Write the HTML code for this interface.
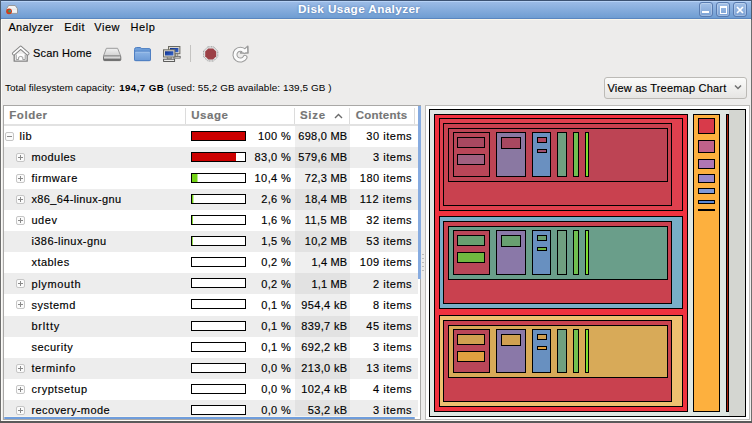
<!DOCTYPE html>
<html><head><meta charset="utf-8"><style>
*{margin:0;padding:0;box-sizing:content-box}
html,body{width:752px;height:423px;overflow:hidden;background:#edeceb;font-family:"Liberation Sans",sans-serif}
#win{position:absolute;left:0;top:0;width:752px;height:423px;overflow:hidden}
.f{position:absolute}
.b{position:absolute;border:1px solid #000}
.t{position:absolute;font-size:11.8px;line-height:22px;color:#000;-webkit-text-stroke:0.1px #000;white-space:nowrap;height:21px}
.r{text-align:right}
.exp{position:absolute;width:7px;height:7px;border:1px solid #c6c6c6;border-radius:2px;background:#fbfbfb}
.eh{position:absolute;left:1px;top:3px;width:5px;height:1px;background:#8a8a8a}
.ev{position:absolute;left:3px;top:1px;width:1px;height:5px;background:#8a8a8a}
.bar{position:absolute;width:53px;height:8px;border:1px solid #000;background:#fff}
.hd{position:absolute;font-size:12px;font-weight:bold;color:#747474;line-height:18px;top:106px;letter-spacing:0.3px}
.sep{position:absolute;top:108px;width:1px;height:16px;background:#dcdcdc}
.menu{position:absolute;top:19px;font-size:11.4px;line-height:17px;color:#000;-webkit-text-stroke:0.2px #000}
</style></head><body><div id="win">
<!-- title bar -->
<div class="f" style="left:0;top:0;width:752px;height:1px;background:#3c5272"></div>
<div class="f" style="left:0;top:1px;width:752px;height:1px;background:#b6d2f6"></div>
<div class="f" style="left:0;top:2px;width:752px;height:16px;background:linear-gradient(#9bbbe6,#6f9dd2)"></div>
<div class="f" style="left:0;top:18px;width:752px;height:1px;background:#5a86bf"></div>
<div class="f" style="left:0;top:19px;width:752px;height:1px;background:#fbf7ec"></div>
<div class="f" style="left:0;top:0;width:1px;height:423px;background:#4a5a70"></div>
<div class="f" style="left:751px;top:0;width:1px;height:423px;background:#4a5a70"></div>
<div class="f" style="left:0;top:20px;width:1px;height:403px;background:#6e6e6e"></div>
<div class="f" style="left:751px;top:20px;width:1px;height:403px;background:#6e6e6e"></div>
<div class="f" style="left:0;top:421px;width:752px;height:2px;background:#5a5a5a"></div><div class="f" style="left:1px;top:20px;width:1px;height:401px;background:#fcfbf7"></div><div class="f" style="left:1px;top:420px;width:750px;height:1px;background:#fcfbf7"></div>

<!-- title icon -->
<svg class="f" style="left:0;top:0" width="24" height="20" viewBox="0 0 24 20">
<path d="M8.6 5.5H15.2L17.5 8.8V13.4H6.6V8.8Z" fill="#f3f3f3" stroke="#8c8c8c" stroke-width="0.8" stroke-linejoin="round"/>
<path d="M7 9.2H17.1" stroke="#d8d8d8" stroke-width="0.6"/>
<circle cx="9.1" cy="11.3" r="2.9" fill="#d23c1c"/>
<circle cx="9.6" cy="11.2" r="1.4" fill="#3a9a58"/>
<circle cx="10.2" cy="11" r="0.7" fill="#4a78d0"/>
</svg>
<!-- window buttons -->
<div class="f" style="left:699px;top:2px;width:12px;height:13px;border:1px solid #587bb0;border-radius:3px;background:linear-gradient(#a3c1e8,#7ca2d4);box-shadow:inset 0 0 0 1px rgba(255,255,255,0.25)"></div>
<div class="f" style="left:702px;top:11px;width:7px;height:2px;background:#fff"></div>
<div class="f" style="left:716px;top:2px;width:12px;height:13px;border:1px solid #587bb0;border-radius:3px;background:linear-gradient(#a3c1e8,#7ca2d4);box-shadow:inset 0 0 0 1px rgba(255,255,255,0.25)"></div>
<div class="f" style="left:720px;top:6px;width:5px;height:5px;border:1px solid #fff;border-top-width:2px"></div>
<div class="f" style="left:733px;top:2px;width:12px;height:13px;border:1px solid #587bb0;border-radius:3px;background:linear-gradient(#a3c1e8,#7ca2d4);box-shadow:inset 0 0 0 1px rgba(255,255,255,0.25)"></div>
<svg class="f" style="left:735px;top:5px" width="10" height="10" viewBox="0 0 10 10"><path d="M2 2l6 6M8 2l-6 6" stroke="#fff" stroke-width="1.7"/></svg>
<!-- menu -->

<!-- toolbar -->
<svg class="f" style="left:8px;top:42px" width="24" height="24" viewBox="0 0 24 24">
<path d="M6.2 11.8V19.2H19.2V11.8" fill="#fdfdfd" stroke="#828282" stroke-width="1.3" stroke-linejoin="round"/>
<path d="M8.2 12.5V17.6H10.6V15.2Q12.7 13.6 14.8 15.2V17.6H17.2V12.5" fill="none" stroke="#9a9a9a" stroke-width="1"/>
<path d="M5.8 11.6L12.7 5.6 19.6 11.6" fill="none" stroke="#858585" stroke-width="3.8" stroke-linecap="round" stroke-linejoin="round"/>
<path d="M5.8 11.6L12.7 5.6 19.6 11.6" fill="none" stroke="#fdfdfd" stroke-width="1.9" stroke-linecap="round" stroke-linejoin="round"/>
</svg>

<svg class="f" style="left:100px;top:42px" width="24" height="24" viewBox="0 0 24 24">
<defs><linearGradient id="dg" x1="0" y1="0" x2="0" y2="1"><stop offset="0" stop-color="#f2f2f2"/><stop offset="1" stop-color="#cfcfcf"/></linearGradient>
<linearGradient id="db" x1="0" y1="0" x2="0" y2="1"><stop offset="0" stop-color="#fbfbfb"/><stop offset="0.45" stop-color="#c8c8c8"/><stop offset="1" stop-color="#2c2c2c"/></linearGradient></defs>
<path d="M6.4 6.3H17.6L20.8 14.2H3.4Z" fill="url(#dg)" stroke="#9c9c9c" stroke-width="1"/>
<rect x="3.5" y="14" width="17.3" height="4.6" rx="1" fill="url(#db)" stroke="#6c6c6c" stroke-width="0.9"/>
</svg>
<svg class="f" style="left:130px;top:42px" width="24" height="24" viewBox="0 0 24 24">
<defs><linearGradient id="fg" x1="0" y1="0" x2="0" y2="1"><stop offset="0" stop-color="#8db5e6"/><stop offset="1" stop-color="#6c9ad6"/></linearGradient></defs>
<path d="M4.5 7.5Q4.5 5.5 6.5 5.5H10.2L11.8 6.6H19.2Q20.5 6.6 20.5 8V17.6Q20.5 18.6 19.4 18.6H5.6Q4.5 18.6 4.5 17.5Z" fill="#6f9fda" stroke="#4f7fc2" stroke-width="1"/>
<path d="M4.5 9.2H20.5V17.4Q20.5 18.6 19.3 18.6H5.7Q4.5 18.6 4.5 17.4Z" fill="url(#fg)" stroke="#4f7fc2" stroke-width="1"/>
<path d="M5.5 10.2H19.5" stroke="#a8c8ee" stroke-width="0.8"/>
</svg>
<svg class="f" style="left:160px;top:42px" width="24" height="24" viewBox="0 0 24 24">
<defs><linearGradient id="sg" x1="0" y1="0" x2="1" y2="1"><stop offset="0" stop-color="#0d2f8a"/><stop offset="1" stop-color="#3a6ad0"/></linearGradient></defs>
<rect x="15.6" y="11.5" width="2.2" height="3" fill="#d0d0c8" stroke="#777" stroke-width="0.7"/>
<rect x="13.8" y="14.3" width="6.4" height="1.8" fill="#e8e8e4" stroke="#555" stroke-width="0.8"/>
<rect x="8.5" y="4.5" width="11.4" height="7.2" fill="#dcd8ce" stroke="#6c6c64" stroke-width="1"/>
<rect x="10" y="6" width="8.4" height="4.2" fill="url(#sg)"/>
<rect x="7.2" y="14.5" width="4" height="2.4" fill="#d4d4cc" stroke="#777" stroke-width="0.8"/>
<rect x="3.5" y="7.8" width="11.4" height="7.2" fill="#dcd8ce" stroke="#6c6c64" stroke-width="1"/>
<rect x="5" y="9.3" width="8.4" height="4.2" fill="url(#sg)"/>
<rect x="3.6" y="17.2" width="11" height="2.3" fill="#ececea" stroke="#4e4e4e" stroke-width="0.9"/>
</svg>
<div class="f" style="left:190px;top:45px;width:1px;height:17px;background:#c4c3c1"></div>
<svg class="f" style="left:198px;top:42px" width="24" height="24" viewBox="0 0 24 24">
<path d="M9.8 4.8H15.6L19.8 9V14.8L15.6 19H9.8L5.6 14.8V9Z" fill="#e2e4e4" stroke="#8e9090" stroke-width="0.9" stroke-dasharray="1 0.6"/>
<path d="M10.3 6.4H15.1L18.2 9.5V14.3L15.1 17.4H10.3L7.2 14.3V9.5Z" fill="#9c4046"/>
</svg>
<svg class="f" style="left:228px;top:42px" width="24" height="24" viewBox="0 0 24 24">
<path d="M16.4 9.1A5.4 5.4 0 1 0 17 15.4" fill="none" stroke="#9a9a9a" stroke-width="5" stroke-linecap="round"/>
<path d="M12.6 10.9L20 10.9 19.8 4.4Z" fill="#9a9a9a" stroke="#9a9a9a" stroke-width="1.6" stroke-linejoin="round"/>
<path d="M16.4 9.1A5.4 5.4 0 1 0 17 15.4" fill="none" stroke="#fbfbfb" stroke-width="3" stroke-linecap="round"/>
<path d="M13.6 10.2L19.2 10.2 19 5.6Z" fill="#fbfbfb"/>
</svg>
<!-- info line -->

<!-- combo -->
<div class="f" style="left:604px;top:77px;width:141px;height:20px;border:1px solid #bcbab6;border-radius:3px;background:linear-gradient(#fbfbfa,#e6e5e3)"></div>

<svg class="f" style="left:734px;top:84px" width="8" height="6" viewBox="0 0 8 6"><path d="M1 1.5L4 4.5 7 1.5" fill="none" stroke="#707070" stroke-width="1.5"/></svg>
<!-- tree -->
<div class="f" style="left:3px;top:105px;width:416px;height:313px;border:1px solid #a9a8a6;background:#fff"></div>
<div class="f" style="left:4px;top:124px;width:414px;height:2px;background:#e2e2e2"></div>

<div class="sep" style="left:185px"></div>

<div class="sep" style="left:294px"></div>

<svg class="f" style="left:334px;top:113px" width="9" height="6" viewBox="0 0 9 6"><path d="M1 5L4.5 1.5 8 5" fill="none" stroke="#6a6a6a" stroke-width="1.4"/></svg>
<div class="sep" style="left:349px"></div>

<div class="sep" style="left:414px"></div>
<div class="f" style="left:4px;top:126px;width:414px;height:21px;background:#ffffff"></div><div class="f" style="left:295px;top:126px;width:55px;height:21px;background:#efefef"></div><div class="exp" style="left:5px;top:132px"><div class="eh"></div></div><div class="bar" style="left:191px;top:131px"><div style="position:absolute;left:0;top:0;width:53px;height:8px;background:#cc0000"></div></div><div class="f" style="left:4px;top:147px;width:414px;height:21px;background:#ededed"></div><div class="f" style="left:295px;top:147px;width:55px;height:21px;background:#e2e2e2"></div><div class="exp" style="left:16px;top:153px"><div class="eh"></div><div class="ev"></div></div><div class="bar" style="left:191px;top:152px"><div style="position:absolute;left:0;top:0;width:44px;height:8px;background:#cc0000"></div></div><div class="f" style="left:4px;top:168px;width:414px;height:21px;background:#ffffff"></div><div class="f" style="left:295px;top:168px;width:55px;height:21px;background:#efefef"></div><div class="exp" style="left:16px;top:174px"><div class="eh"></div><div class="ev"></div></div><div class="bar" style="left:191px;top:173px"><div style="position:absolute;left:0;top:0;width:5px;height:8px;background:#73d216"></div><div style="position:absolute;left:5px;top:0;width:1px;height:8px;background:#73d216;opacity:0.49"></div></div><div class="f" style="left:4px;top:189px;width:414px;height:21px;background:#ededed"></div><div class="f" style="left:295px;top:189px;width:55px;height:21px;background:#e2e2e2"></div><div class="exp" style="left:16px;top:195px"><div class="eh"></div><div class="ev"></div></div><div class="bar" style="left:191px;top:194px"><div style="position:absolute;left:0;top:0;width:1px;height:8px;background:#73d216"></div><div style="position:absolute;left:1px;top:0;width:1px;height:8px;background:#73d216;opacity:0.40"></div></div><div class="f" style="left:4px;top:210px;width:414px;height:21px;background:#ffffff"></div><div class="f" style="left:295px;top:210px;width:55px;height:21px;background:#efefef"></div><div class="exp" style="left:16px;top:216px"><div class="eh"></div><div class="ev"></div></div><div class="bar" style="left:191px;top:215px"><div style="position:absolute;left:0px;top:0;width:1px;height:8px;background:#73d216;opacity:0.87"></div></div><div class="f" style="left:4px;top:231px;width:414px;height:21px;background:#ededed"></div><div class="f" style="left:295px;top:231px;width:55px;height:21px;background:#e2e2e2"></div><div class="bar" style="left:191px;top:236px"><div style="position:absolute;left:0px;top:0;width:1px;height:8px;background:#73d216;opacity:0.77"></div></div><div class="f" style="left:4px;top:252px;width:414px;height:21px;background:#ffffff"></div><div class="f" style="left:295px;top:252px;width:55px;height:21px;background:#efefef"></div><div class="bar" style="left:191px;top:257px"></div><div class="f" style="left:4px;top:273px;width:414px;height:21px;background:#ededed"></div><div class="f" style="left:295px;top:273px;width:55px;height:21px;background:#e2e2e2"></div><div class="exp" style="left:16px;top:279px"><div class="eh"></div><div class="ev"></div></div><div class="bar" style="left:191px;top:278px"></div><div class="f" style="left:4px;top:294px;width:414px;height:22px;background:#ffffff"></div><div class="f" style="left:295px;top:294px;width:55px;height:22px;background:#efefef"></div><div class="exp" style="left:16px;top:300px"><div class="eh"></div><div class="ev"></div></div><div class="bar" style="left:191px;top:299px"></div><div class="f" style="left:4px;top:316px;width:414px;height:21px;background:#ededed"></div><div class="f" style="left:295px;top:316px;width:55px;height:21px;background:#e2e2e2"></div><div class="bar" style="left:191px;top:321px"></div><div class="f" style="left:4px;top:337px;width:414px;height:21px;background:#ffffff"></div><div class="f" style="left:295px;top:337px;width:55px;height:21px;background:#efefef"></div><div class="bar" style="left:191px;top:342px"></div><div class="f" style="left:4px;top:358px;width:414px;height:21px;background:#ededed"></div><div class="f" style="left:295px;top:358px;width:55px;height:21px;background:#e2e2e2"></div><div class="exp" style="left:16px;top:364px"><div class="eh"></div><div class="ev"></div></div><div class="bar" style="left:191px;top:363px"></div><div class="f" style="left:4px;top:379px;width:414px;height:21px;background:#ffffff"></div><div class="f" style="left:295px;top:379px;width:55px;height:21px;background:#efefef"></div><div class="exp" style="left:16px;top:385px"><div class="eh"></div><div class="ev"></div></div><div class="bar" style="left:191px;top:384px"></div><div class="f" style="left:4px;top:400px;width:414px;height:16px;background:#ededed"></div><div class="f" style="left:295px;top:400px;width:55px;height:16px;background:#e2e2e2"></div><div class="exp" style="left:16px;top:406px"><div class="eh"></div><div class="ev"></div></div><div class="bar" style="left:191px;top:405px"></div>
<div class="f" style="left:4px;top:416px;width:414px;height:1px;background:#f6f4ee"></div><div class="f" style="left:4px;top:417px;width:411px;height:2px;background:#6f9ddc;border-radius:1px"></div>
<div class="f" style="left:418px;top:106px;width:3px;height:173px;background:#86abe0"></div>
<!-- pane handle -->
<div class="f" style="left:422px;top:254px;width:2px;height:1px;background:#bdbdbd"></div><div class="f" style="left:422px;top:258px;width:2px;height:1px;background:#bdbdbd"></div><div class="f" style="left:422px;top:262px;width:2px;height:1px;background:#bdbdbd"></div><div class="f" style="left:422px;top:266px;width:2px;height:1px;background:#bdbdbd"></div><div class="f" style="left:422px;top:270px;width:2px;height:1px;background:#bdbdbd"></div>
<!-- treemap -->
<div class="f" style="left:425px;top:105px;width:323px;height:313px;border:1px solid #bdbcba;background:#fff"></div><div class="b" style="left:429px;top:109px;width:315px;height:306px;background:#dfe7e2;border-color:#000"></div><div class="f" style="left:729px;top:110px;width:16px;height:306px;background:#d4d6d1"></div><div class="b" style="left:434px;top:114px;width:252px;height:296px;background:#f0323f;border-color:#000"></div><div class="b" style="left:693px;top:114px;width:25px;height:296px;background:#fdb03e;border-color:#000"></div><div class="b" style="left:726px;top:114px;width:1px;height:296px;background:#a8200c;border-color:#000"></div><div class="b" style="left:698px;top:118px;width:15px;height:14px;background:#d83a4a;border-color:#000"></div><div class="b" style="left:698px;top:140px;width:15px;height:11px;background:#c0628a;border-color:#000"></div><div class="b" style="left:698px;top:159px;width:15px;height:8px;background:#b076b4;border-color:#000"></div><div class="b" style="left:698px;top:174px;width:15px;height:7px;background:#9a88c8;border-color:#000"></div><div class="b" style="left:698px;top:188px;width:15px;height:4px;background:#7f9ad8;border-color:#000"></div><div class="b" style="left:698px;top:200px;width:15px;height:2px;background:#5a86d2;border-color:#000"></div><div class="f" style="left:698px;top:209px;width:17px;height:2px;background:#000"></div><div class="b" style="left:439px;top:118px;width:242px;height:91px;background:#df404e;border-color:#000"></div><div class="b" style="left:443px;top:123px;width:227px;height:81px;background:#c9414f;border-color:#000"></div><div class="b" style="left:448px;top:128px;width:218px;height:52px;background:#bd4454;border-color:#000"></div><div class="b" style="left:453px;top:132px;width:35px;height:43px;background:#b94658;border-color:#000"></div><div class="b" style="left:457px;top:137px;width:26px;height:9px;background:#a84860;border-color:#000"></div><div class="b" style="left:457px;top:154px;width:26px;height:9px;background:#a06080;border-color:#000"></div><div class="b" style="left:496px;top:132px;width:28px;height:43px;background:#8a78a2;border-color:#000"></div><div class="b" style="left:501px;top:137px;width:18px;height:10px;background:#a84860;border-color:#000"></div><div class="b" style="left:532px;top:132px;width:17px;height:43px;background:#6a90c0;border-color:#000"></div><div class="b" style="left:537px;top:137px;width:8px;height:4px;background:#b04860;border-color:#000"></div><div class="b" style="left:537px;top:149px;width:8px;height:2px;background:#a05070;border-color:#000"></div><div class="b" style="left:557px;top:132px;width:8px;height:43px;background:#70a080;border-color:#000"></div><div class="b" style="left:573px;top:132px;width:4px;height:43px;background:#70c050;border-color:#000"></div><div class="b" style="left:585px;top:132px;width:2px;height:43px;background:#80e030;border-color:#000"></div><div class="b" style="left:439px;top:216px;width:242px;height:91px;background:#78aec8;border-color:#000"></div><div class="b" style="left:443px;top:221px;width:227px;height:81px;background:#c9414f;border-color:#000"></div><div class="b" style="left:448px;top:226px;width:218px;height:52px;background:#6a9e8a;border-color:#000"></div><div class="b" style="left:453px;top:230px;width:35px;height:43px;background:#b94658;border-color:#000"></div><div class="b" style="left:457px;top:235px;width:26px;height:9px;background:#68a070;border-color:#000"></div><div class="b" style="left:457px;top:252px;width:26px;height:9px;background:#70b840;border-color:#000"></div><div class="b" style="left:496px;top:230px;width:28px;height:43px;background:#8a78a8;border-color:#000"></div><div class="b" style="left:501px;top:235px;width:18px;height:10px;background:#68a070;border-color:#000"></div><div class="b" style="left:532px;top:230px;width:17px;height:43px;background:#6890c0;border-color:#000"></div><div class="b" style="left:537px;top:235px;width:8px;height:4px;background:#68a070;border-color:#000"></div><div class="b" style="left:537px;top:247px;width:8px;height:2px;background:#70b840;border-color:#000"></div><div class="b" style="left:557px;top:230px;width:8px;height:43px;background:#70a080;border-color:#000"></div><div class="b" style="left:573px;top:230px;width:4px;height:43px;background:#70c050;border-color:#000"></div><div class="b" style="left:585px;top:230px;width:2px;height:43px;background:#80e030;border-color:#000"></div><div class="b" style="left:439px;top:315px;width:242px;height:90px;background:#eec070;border-color:#000"></div><div class="b" style="left:443px;top:320px;width:227px;height:80px;background:#c9414f;border-color:#000"></div><div class="b" style="left:448px;top:325px;width:218px;height:51px;background:#d8aa58;border-color:#000"></div><div class="b" style="left:453px;top:329px;width:35px;height:42px;background:#b94658;border-color:#000"></div><div class="b" style="left:457px;top:334px;width:26px;height:9px;background:#d0a050;border-color:#000"></div><div class="b" style="left:457px;top:351px;width:26px;height:9px;background:#e0a040;border-color:#000"></div><div class="b" style="left:496px;top:329px;width:28px;height:42px;background:#8a78a8;border-color:#000"></div><div class="b" style="left:501px;top:334px;width:18px;height:10px;background:#d0a050;border-color:#000"></div><div class="b" style="left:532px;top:329px;width:17px;height:42px;background:#6890c0;border-color:#000"></div><div class="b" style="left:537px;top:334px;width:8px;height:4px;background:#d0a050;border-color:#000"></div><div class="b" style="left:537px;top:346px;width:8px;height:2px;background:#e0a040;border-color:#000"></div><div class="b" style="left:557px;top:329px;width:8px;height:42px;background:#70a080;border-color:#000"></div><div class="b" style="left:573px;top:329px;width:4px;height:42px;background:#70c050;border-color:#000"></div><div class="b" style="left:585px;top:329px;width:2px;height:42px;background:#80e030;border-color:#000"></div>
<svg class="f" style="left:0;top:0" width="752" height="423" font-family="Liberation Sans"><defs><filter id="ts" x="-5%" y="-30%" width="110%" height="160%"><feGaussianBlur stdDeviation="0.9"/></filter></defs><text x="19.40" y="140.00" text-anchor="start" font-size="11.00" font-weight="normal" fill="#000" textLength="12.32" lengthAdjust="spacing" stroke="#000" stroke-width="0.15">lib</text><text x="290.80" y="140.00" text-anchor="end" font-size="11.00" font-weight="normal" fill="#000" textLength="32.89" lengthAdjust="spacing" stroke="#000" stroke-width="0.15">100 %</text><text x="347.20" y="140.00" text-anchor="end" font-size="11.00" font-weight="normal" fill="#000" textLength="48.95" lengthAdjust="spacing" stroke="#000" stroke-width="0.15">698,0 MB</text><text x="411.60" y="140.00" text-anchor="end" font-size="11.00" font-weight="normal" fill="#000" textLength="45.25" lengthAdjust="spacing" stroke="#000" stroke-width="0.15">30 items</text><text x="31.40" y="161.08" text-anchor="start" font-size="11.00" font-weight="normal" fill="#000" textLength="44.18" lengthAdjust="spacing" stroke="#000" stroke-width="0.15">modules</text><text x="290.80" y="161.08" text-anchor="end" font-size="11.00" font-weight="normal" fill="#000" textLength="36.18" lengthAdjust="spacing" stroke="#000" stroke-width="0.15">83,0 %</text><text x="347.20" y="161.08" text-anchor="end" font-size="11.00" font-weight="normal" fill="#000" textLength="48.95" lengthAdjust="spacing" stroke="#000" stroke-width="0.15">579,6 MB</text><text x="411.60" y="161.08" text-anchor="end" font-size="11.00" font-weight="normal" fill="#000" textLength="38.65" lengthAdjust="spacing" stroke="#000" stroke-width="0.15">3 items</text><text x="31.40" y="182.16" text-anchor="start" font-size="11.00" font-weight="normal" fill="#000" textLength="45.88" lengthAdjust="spacing" stroke="#000" stroke-width="0.15">firmware</text><text x="290.80" y="182.16" text-anchor="end" font-size="11.00" font-weight="normal" fill="#000" textLength="36.18" lengthAdjust="spacing" stroke="#000" stroke-width="0.15">10,4 %</text><text x="347.20" y="182.16" text-anchor="end" font-size="11.00" font-weight="normal" fill="#000" textLength="42.37" lengthAdjust="spacing" stroke="#000" stroke-width="0.15">72,3 MB</text><text x="411.60" y="182.16" text-anchor="end" font-size="11.00" font-weight="normal" fill="#000" textLength="51.83" lengthAdjust="spacing" stroke="#000" stroke-width="0.15">180 items</text><text x="31.40" y="203.24" text-anchor="start" font-size="11.00" font-weight="normal" fill="#000" textLength="89.80" lengthAdjust="spacing" stroke="#000" stroke-width="0.15">x86_64-linux-gnu</text><text x="290.80" y="203.24" text-anchor="end" font-size="11.00" font-weight="normal" fill="#000" textLength="29.59" lengthAdjust="spacing" stroke="#000" stroke-width="0.15">2,6 %</text><text x="347.20" y="203.24" text-anchor="end" font-size="11.00" font-weight="normal" fill="#000" textLength="42.37" lengthAdjust="spacing" stroke="#000" stroke-width="0.15">18,4 MB</text><text x="411.60" y="203.24" text-anchor="end" font-size="11.00" font-weight="normal" fill="#000" textLength="51.83" lengthAdjust="spacing" stroke="#000" stroke-width="0.15">112 items</text><text x="31.40" y="224.32" text-anchor="start" font-size="11.00" font-weight="normal" fill="#000" textLength="25.63" lengthAdjust="spacing" stroke="#000" stroke-width="0.15">udev</text><text x="290.80" y="224.32" text-anchor="end" font-size="11.00" font-weight="normal" fill="#000" textLength="29.59" lengthAdjust="spacing" stroke="#000" stroke-width="0.15">1,6 %</text><text x="347.20" y="224.32" text-anchor="end" font-size="11.00" font-weight="normal" fill="#000" textLength="42.37" lengthAdjust="spacing" stroke="#000" stroke-width="0.15">11,5 MB</text><text x="411.60" y="224.32" text-anchor="end" font-size="11.00" font-weight="normal" fill="#000" textLength="45.25" lengthAdjust="spacing" stroke="#000" stroke-width="0.15">32 items</text><text x="31.40" y="245.40" text-anchor="start" font-size="11.00" font-weight="normal" fill="#000" textLength="74.79" lengthAdjust="spacing" stroke="#000" stroke-width="0.15">i386-linux-gnu</text><text x="290.80" y="245.40" text-anchor="end" font-size="11.00" font-weight="normal" fill="#000" textLength="29.59" lengthAdjust="spacing" stroke="#000" stroke-width="0.15">1,5 %</text><text x="347.20" y="245.40" text-anchor="end" font-size="11.00" font-weight="normal" fill="#000" textLength="42.37" lengthAdjust="spacing" stroke="#000" stroke-width="0.15">10,2 MB</text><text x="411.60" y="245.40" text-anchor="end" font-size="11.00" font-weight="normal" fill="#000" textLength="45.25" lengthAdjust="spacing" stroke="#000" stroke-width="0.15">53 items</text><text x="31.40" y="266.48" text-anchor="start" font-size="11.00" font-weight="normal" fill="#000" textLength="37.75" lengthAdjust="spacing" stroke="#000" stroke-width="0.15">xtables</text><text x="290.80" y="266.48" text-anchor="end" font-size="11.00" font-weight="normal" fill="#000" textLength="29.59" lengthAdjust="spacing" stroke="#000" stroke-width="0.15">0,2 %</text><text x="347.20" y="266.48" text-anchor="end" font-size="11.00" font-weight="normal" fill="#000" textLength="35.79" lengthAdjust="spacing" stroke="#000" stroke-width="0.15">1,4 MB</text><text x="411.60" y="266.48" text-anchor="end" font-size="11.00" font-weight="normal" fill="#000" textLength="51.83" lengthAdjust="spacing" stroke="#000" stroke-width="0.15">109 items</text><text x="31.40" y="287.56" text-anchor="start" font-size="11.00" font-weight="normal" fill="#000" textLength="49.16" lengthAdjust="spacing" stroke="#000" stroke-width="0.15">plymouth</text><text x="290.80" y="287.56" text-anchor="end" font-size="11.00" font-weight="normal" fill="#000" textLength="29.59" lengthAdjust="spacing" stroke="#000" stroke-width="0.15">0,2 %</text><text x="347.20" y="287.56" text-anchor="end" font-size="11.00" font-weight="normal" fill="#000" textLength="35.79" lengthAdjust="spacing" stroke="#000" stroke-width="0.15">1,1 MB</text><text x="411.60" y="287.56" text-anchor="end" font-size="11.00" font-weight="normal" fill="#000" textLength="38.65" lengthAdjust="spacing" stroke="#000" stroke-width="0.15">2 items</text><text x="31.40" y="308.64" text-anchor="start" font-size="11.00" font-weight="normal" fill="#000" textLength="43.99" lengthAdjust="spacing" stroke="#000" stroke-width="0.15">systemd</text><text x="290.80" y="308.64" text-anchor="end" font-size="11.00" font-weight="normal" fill="#000" textLength="29.59" lengthAdjust="spacing" stroke="#000" stroke-width="0.15">0,1 %</text><text x="347.20" y="308.64" text-anchor="end" font-size="11.00" font-weight="normal" fill="#000" textLength="46.03" lengthAdjust="spacing" stroke="#000" stroke-width="0.15">954,4 kB</text><text x="411.60" y="308.64" text-anchor="end" font-size="11.00" font-weight="normal" fill="#000" textLength="38.65" lengthAdjust="spacing" stroke="#000" stroke-width="0.15">8 items</text><text x="31.40" y="329.72" text-anchor="start" font-size="11.00" font-weight="normal" fill="#000" textLength="27.94" lengthAdjust="spacing" stroke="#000" stroke-width="0.15">brltty</text><text x="290.80" y="329.72" text-anchor="end" font-size="11.00" font-weight="normal" fill="#000" textLength="29.59" lengthAdjust="spacing" stroke="#000" stroke-width="0.15">0,1 %</text><text x="347.20" y="329.72" text-anchor="end" font-size="11.00" font-weight="normal" fill="#000" textLength="46.03" lengthAdjust="spacing" stroke="#000" stroke-width="0.15">839,7 kB</text><text x="411.60" y="329.72" text-anchor="end" font-size="11.00" font-weight="normal" fill="#000" textLength="45.25" lengthAdjust="spacing" stroke="#000" stroke-width="0.15">45 items</text><text x="31.40" y="350.80" text-anchor="start" font-size="11.00" font-weight="normal" fill="#000" textLength="41.34" lengthAdjust="spacing" stroke="#000" stroke-width="0.15">security</text><text x="290.80" y="350.80" text-anchor="end" font-size="11.00" font-weight="normal" fill="#000" textLength="29.59" lengthAdjust="spacing" stroke="#000" stroke-width="0.15">0,1 %</text><text x="347.20" y="350.80" text-anchor="end" font-size="11.00" font-weight="normal" fill="#000" textLength="46.03" lengthAdjust="spacing" stroke="#000" stroke-width="0.15">692,2 kB</text><text x="411.60" y="350.80" text-anchor="end" font-size="11.00" font-weight="normal" fill="#000" textLength="38.65" lengthAdjust="spacing" stroke="#000" stroke-width="0.15">3 items</text><text x="31.40" y="371.88" text-anchor="start" font-size="11.00" font-weight="normal" fill="#000" textLength="44.00" lengthAdjust="spacing" stroke="#000" stroke-width="0.15">terminfo</text><text x="290.80" y="371.88" text-anchor="end" font-size="11.00" font-weight="normal" fill="#000" textLength="29.59" lengthAdjust="spacing" stroke="#000" stroke-width="0.15">0,0 %</text><text x="347.20" y="371.88" text-anchor="end" font-size="11.00" font-weight="normal" fill="#000" textLength="46.03" lengthAdjust="spacing" stroke="#000" stroke-width="0.15">213,0 kB</text><text x="411.60" y="371.88" text-anchor="end" font-size="11.00" font-weight="normal" fill="#000" textLength="45.25" lengthAdjust="spacing" stroke="#000" stroke-width="0.15">13 items</text><text x="31.40" y="392.96" text-anchor="start" font-size="11.00" font-weight="normal" fill="#000" textLength="55.65" lengthAdjust="spacing" stroke="#000" stroke-width="0.15">cryptsetup</text><text x="290.80" y="392.96" text-anchor="end" font-size="11.00" font-weight="normal" fill="#000" textLength="29.59" lengthAdjust="spacing" stroke="#000" stroke-width="0.15">0,0 %</text><text x="347.20" y="392.96" text-anchor="end" font-size="11.00" font-weight="normal" fill="#000" textLength="46.03" lengthAdjust="spacing" stroke="#000" stroke-width="0.15">102,4 kB</text><text x="411.60" y="392.96" text-anchor="end" font-size="11.00" font-weight="normal" fill="#000" textLength="38.65" lengthAdjust="spacing" stroke="#000" stroke-width="0.15">4 items</text><text x="31.40" y="414.04" text-anchor="start" font-size="11.00" font-weight="normal" fill="#000" textLength="78.21" lengthAdjust="spacing" stroke="#000" stroke-width="0.15">recovery-mode</text><text x="290.80" y="414.04" text-anchor="end" font-size="11.00" font-weight="normal" fill="#000" textLength="29.59" lengthAdjust="spacing" stroke="#000" stroke-width="0.15">0,0 %</text><text x="347.20" y="414.04" text-anchor="end" font-size="11.00" font-weight="normal" fill="#000" textLength="39.44" lengthAdjust="spacing" stroke="#000" stroke-width="0.15">53,2 kB</text><text x="411.60" y="414.04" text-anchor="end" font-size="11.00" font-weight="normal" fill="#000" textLength="38.65" lengthAdjust="spacing" stroke="#000" stroke-width="0.15">3 items</text><text x="297.90" y="13.00" text-anchor="start" font-size="11.76" font-weight="bold" fill="#2c4f86" fill-opacity="0.55" textLength="122.00" lengthAdjust="spacing" filter="url(#ts)">Disk Usage Analyzer</text><text x="297.90" y="13.00" text-anchor="start" font-size="11.76" font-weight="bold" fill="#fff" textLength="122.00" lengthAdjust="spacing">Disk Usage Analyzer</text><text x="8.50" y="31.00" text-anchor="start" font-size="11.00" font-weight="normal" fill="#000" textLength="44.70" lengthAdjust="spacing" stroke="#000" stroke-width="0.15">Analyzer</text><text x="64.20" y="31.00" text-anchor="start" font-size="11.00" font-weight="normal" fill="#000" textLength="20.30" lengthAdjust="spacing" stroke="#000" stroke-width="0.15">Edit</text><text x="94.30" y="31.00" text-anchor="start" font-size="11.00" font-weight="normal" fill="#000" textLength="25.20" lengthAdjust="spacing" stroke="#000" stroke-width="0.15">View</text><text x="130.50" y="31.00" text-anchor="start" font-size="11.00" font-weight="normal" fill="#000" textLength="24.40" lengthAdjust="spacing" stroke="#000" stroke-width="0.15">Help</text><text x="33.00" y="57.00" text-anchor="start" font-size="11.00" font-weight="normal" fill="#000" textLength="58.70" lengthAdjust="spacing" stroke="#000" stroke-width="0.15">Scan Home</text><text x="5.00" y="91.00" text-anchor="start" font-size="9.90" font-weight="normal" fill="#000" textLength="110.00" lengthAdjust="spacing">Total filesystem capacity:</text><text x="119.20" y="91.00" text-anchor="start" font-size="9.72" font-weight="bold" fill="#000" textLength="44.60" lengthAdjust="spacing">194,7 GB</text><text x="167.00" y="91.00" text-anchor="start" font-size="9.90" font-weight="normal" fill="#000" textLength="164.50" lengthAdjust="spacing">(used: 55,2 GB available: 139,5 GB )</text><text x="607.50" y="91.50" text-anchor="start" font-size="11.00" font-weight="normal" fill="#000" textLength="118.70" lengthAdjust="spacing" stroke="#000" stroke-width="0.15">View as Treemap Chart</text><text x="9.30" y="119.00" text-anchor="start" font-size="11.50" font-weight="bold" fill="#767676" textLength="37.80" lengthAdjust="spacing" stroke="#767676" stroke-width="0.15">Folder</text><text x="191.30" y="119.00" text-anchor="start" font-size="11.50" font-weight="bold" fill="#767676" textLength="36.60" lengthAdjust="spacing" stroke="#767676" stroke-width="0.15">Usage</text><text x="299.90" y="119.00" text-anchor="start" font-size="11.50" font-weight="bold" fill="#767676" textLength="25.30" lengthAdjust="spacing" stroke="#767676" stroke-width="0.15">Size</text><text x="355.70" y="119.00" text-anchor="start" font-size="11.50" font-weight="bold" fill="#767676" textLength="51.50" lengthAdjust="spacing" stroke="#767676" stroke-width="0.15">Contents</text></svg>
</div></body></html>
